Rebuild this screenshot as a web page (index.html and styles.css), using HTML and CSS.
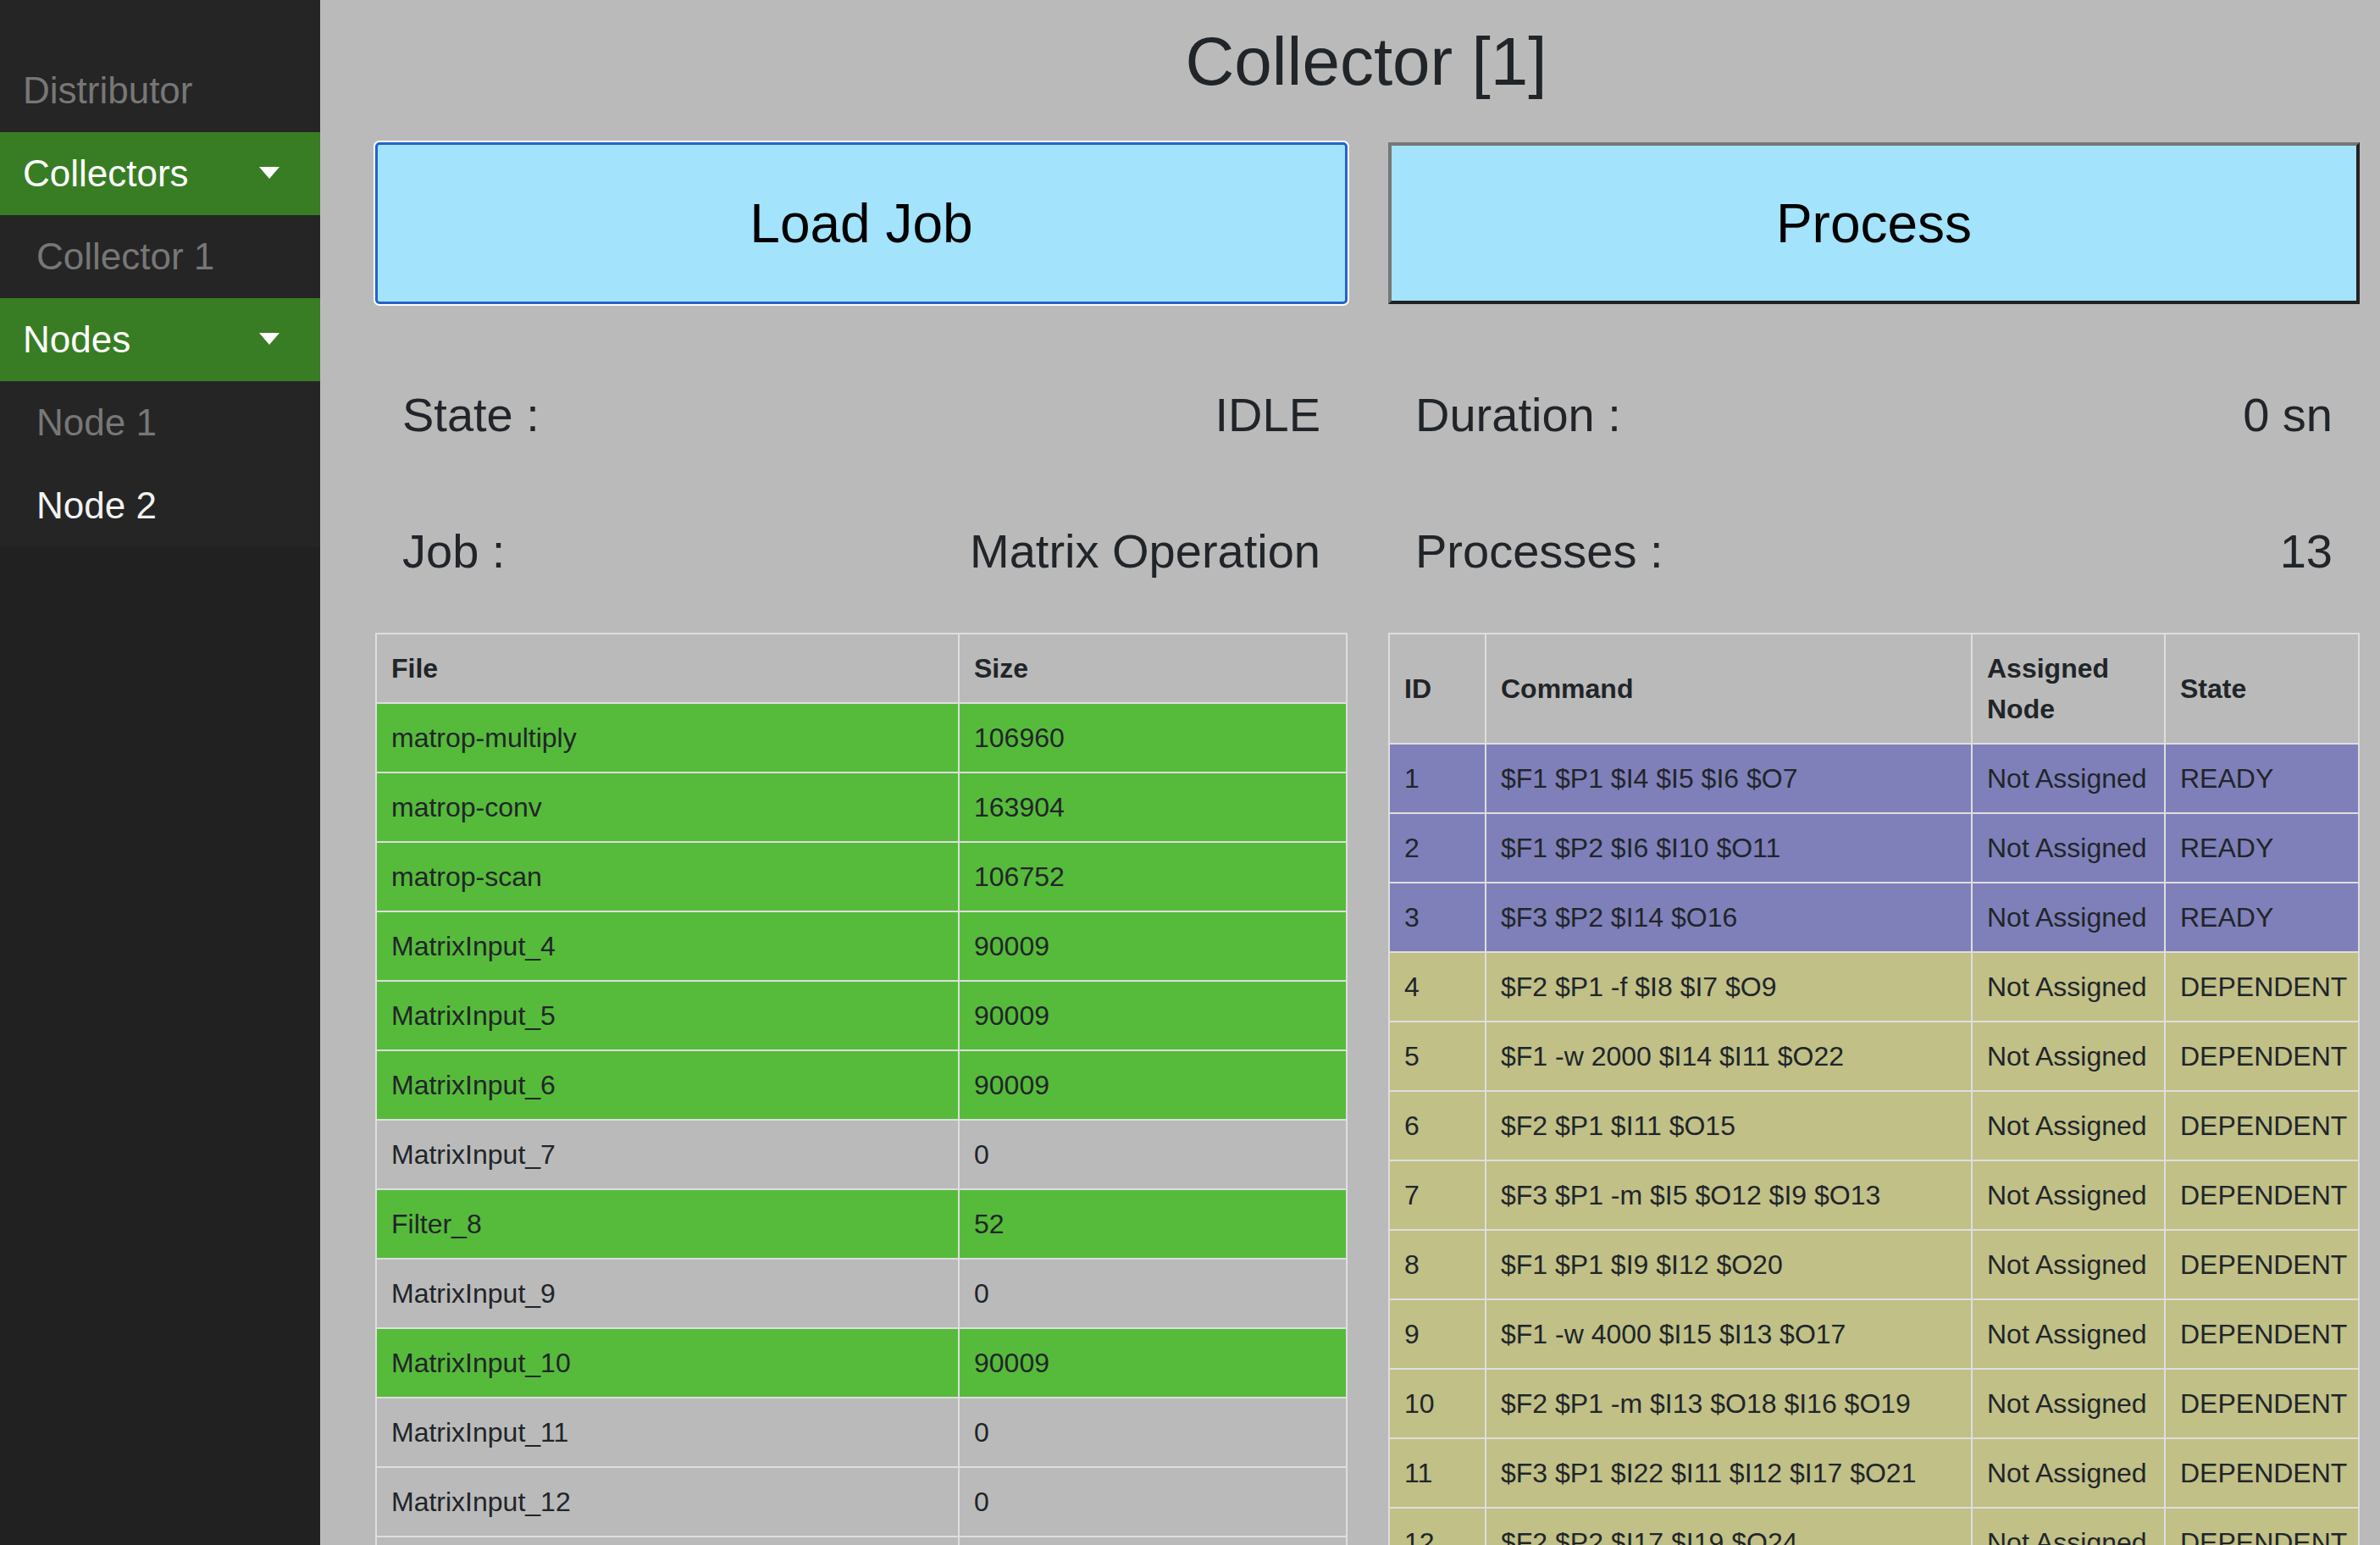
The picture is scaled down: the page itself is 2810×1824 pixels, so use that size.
FILE: index.html
```html
<!DOCTYPE html>
<html lang="en">
<head>
<meta charset="utf-8">
<title>Collector [1]</title>
<link rel="stylesheet" href="styles.css">
</head>
<body>
<div class="app">
  <aside class="sidebar">
    <nav class="menu">
      <div class="item item-muted">Distributor</div>
      <div class="item item-group">Collectors <span class="caret"></span></div>
      <div class="item item-sub item-muted">Collector 1</div>
      <div class="item item-group">Nodes <span class="caret"></span></div>
      <div class="item item-sub item-muted">Node 1</div>
      <div class="item item-sub item-light">Node 2</div>
    </nav>
  </aside>
  <main class="main">
    <h1 class="title">Collector [1]</h1>
    <div class="grid">
      <section class="col">
        <button class="btn btn-focus">Load Job</button>
        <div class="info">
          <div class="info-row"><span>State :</span><span>IDLE</span></div>
          <div class="info-row"><span>Job :</span><span>Matrix Operation</span></div>
        </div>
        <table class="tbl">
          <colgroup><col class="c-file"><col class="c-size"></colgroup>
          <thead><tr><th>File</th><th>Size</th></tr></thead>
          <tbody>
            <tr class="ok"><td>matrop-multiply</td><td>106960</td></tr>
            <tr class="ok"><td>matrop-conv</td><td>163904</td></tr>
            <tr class="ok"><td>matrop-scan</td><td>106752</td></tr>
            <tr class="ok"><td>MatrixInput_4</td><td>90009</td></tr>
            <tr class="ok"><td>MatrixInput_5</td><td>90009</td></tr>
            <tr class="ok"><td>MatrixInput_6</td><td>90009</td></tr>
            <tr><td>MatrixInput_7</td><td>0</td></tr>
            <tr class="ok"><td>Filter_8</td><td>52</td></tr>
            <tr><td>MatrixInput_9</td><td>0</td></tr>
            <tr class="ok"><td>MatrixInput_10</td><td>90009</td></tr>
            <tr><td>MatrixInput_11</td><td>0</td></tr>
            <tr><td>MatrixInput_12</td><td>0</td></tr>
            <tr><td>MatrixInput_13</td><td>0</td></tr>
          </tbody>
        </table>
      </section>
      <section class="col">
        <button class="btn btn-plain">Process</button>
        <div class="info">
          <div class="info-row"><span>Duration :</span><span>0 sn</span></div>
          <div class="info-row"><span>Processes :</span><span>13</span></div>
        </div>
        <table class="tbl">
          <colgroup><col class="c-id"><col class="c-cmd"><col class="c-node"><col class="c-state"></colgroup>
          <thead><tr><th>ID</th><th>Command</th><th>Assigned Node</th><th>State</th></tr></thead>
          <tbody>
            <tr class="ready"><td>1</td><td>$F1 $P1 $I4 $I5 $I6 $O7</td><td>Not Assigned</td><td>READY</td></tr>
            <tr class="ready"><td>2</td><td>$F1 $P2 $I6 $I10 $O11</td><td>Not Assigned</td><td>READY</td></tr>
            <tr class="ready"><td>3</td><td>$F3 $P2 $I14 $O16</td><td>Not Assigned</td><td>READY</td></tr>
            <tr class="dep"><td>4</td><td>$F2 $P1 -f $I8 $I7 $O9</td><td>Not Assigned</td><td>DEPENDENT</td></tr>
            <tr class="dep"><td>5</td><td>$F1 -w 2000 $I14 $I11 $O22</td><td>Not Assigned</td><td>DEPENDENT</td></tr>
            <tr class="dep"><td>6</td><td>$F2 $P1 $I11 $O15</td><td>Not Assigned</td><td>DEPENDENT</td></tr>
            <tr class="dep"><td>7</td><td>$F3 $P1 -m $I5 $O12 $I9 $O13</td><td>Not Assigned</td><td>DEPENDENT</td></tr>
            <tr class="dep"><td>8</td><td>$F1 $P1 $I9 $I12 $O20</td><td>Not Assigned</td><td>DEPENDENT</td></tr>
            <tr class="dep"><td>9</td><td>$F1 -w 4000 $I15 $I13 $O17</td><td>Not Assigned</td><td>DEPENDENT</td></tr>
            <tr class="dep"><td>10</td><td>$F2 $P1 -m $I13 $O18 $I16 $O19</td><td>Not Assigned</td><td>DEPENDENT</td></tr>
            <tr class="dep"><td>11</td><td>$F3 $P1 $I22 $I11 $I12 $I17 $O21</td><td>Not Assigned</td><td>DEPENDENT</td></tr>
            <tr class="dep"><td>12</td><td>$F2 $P2 $I17 $I19 $O24</td><td>Not Assigned</td><td>DEPENDENT</td></tr>
            <tr class="dep"><td>13</td><td>$F1 $P1 $I21 $I24 $O25</td><td>Not Assigned</td><td>DEPENDENT</td></tr>
          </tbody>
        </table>
      </section>
    </div>
  </main>
</div>
</body>
</html>
```

FILE: styles.css
```css
* { box-sizing: border-box; }

html, body {
  margin: 0;
  padding: 0;
  height: 100%;
}

body {
  font-family: "Liberation Sans", Helvetica, Arial, sans-serif;
  background: #bababa;
  color: #212529;
  overflow: hidden;
}

.app {
  display: flex;
  height: 100vh;
  overflow: hidden;
}

.sidebar {
  width: 378px;
  flex: 0 0 378px;
  background: #212121;
}

.menu {
  background: #252525;
  padding-top: 58px;
}

.item {
  height: 98px;
  display: flex;
  align-items: center;
  justify-content: space-between;
  padding: 0 48px 0 27px;
  font-size: 44px;
  color: #ffffff;
}

.item-muted { color: #777777; }
.item-light { color: #f2f2f2; }

.item-sub { padding-left: 43px; }

.item-group {
  background: #387d23;
  color: #ffffff;
}

.caret {
  width: 0;
  height: 0;
  border-left: 12.5px solid transparent;
  border-right: 12.5px solid transparent;
  border-top: 14px solid #ffffff;
  margin-bottom: 2px;
}

.main {
  flex: 1;
  padding: 0 27px 0 65px;
  overflow: hidden;
}

.title {
  margin: 0;
  padding-top: 25px;
  font-size: 80px;
  line-height: 96px;
  font-weight: normal;
  text-align: center;
  color: #212529;
}

.grid {
  display: grid;
  grid-template-columns: 1fr 1fr;
  column-gap: 48px;
  margin-top: 47px;
}

.col {
  display: flex;
  flex-direction: column;
}

.btn {
  height: 191px;
  width: 100%;
  background: #a3e3fb;
  font-family: "Liberation Sans", Helvetica, Arial, sans-serif;
  font-size: 64px;
  color: #000000;
  padding: 0;
  margin: 0;
}

.btn-focus {
  border: 3px solid #2563c9;
  border-radius: 5px;
  box-shadow: 0 0 0 2px #ffffff;
}

.btn-plain {
  border: 4px solid;
  border-color: #777777 #222222 #222222 #777777;
  border-radius: 0;
}

.info {
  margin-top: 50px;
}

.info-row {
  height: 161px;
  display: flex;
  align-items: center;
  justify-content: space-between;
  padding: 0 32px;
  font-size: 56px;
  color: #212529;
}

.tbl {
  margin-top: 16px;
  width: 100%;
  table-layout: fixed;
  border-collapse: collapse;
  border: 2px solid #dedede;
  font-size: 32px;
  line-height: 48px;
  color: #212529;
}

.tbl th,
.tbl td {
  border: 2px solid #dedede;
  padding: 16px 17px;
  text-align: left;
  vertical-align: middle;
}

.tbl td { white-space: nowrap; overflow: hidden; }

.tbl th { font-weight: bold; }

.c-file { width: 688px; }
.c-size { width: 458px; }
.c-id { width: 114px; }
.c-cmd { width: 574px; }
.c-node { width: 228px; }
.c-state { width: 229px; }

.tbl td:last-child { padding-right: 8px; }

.ok { background: #56bb3a; }
.ready { background: #7f80b9; }
.dep { background: #c0c087; }
```
